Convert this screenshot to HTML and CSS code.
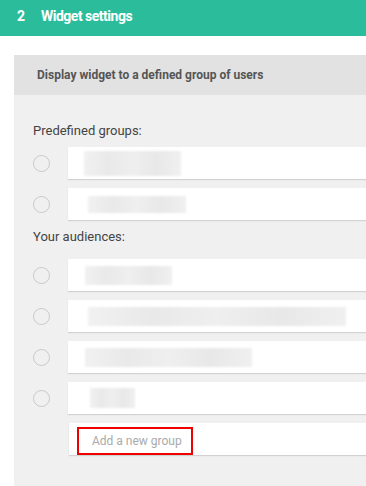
FILE: index.html
```html
<!DOCTYPE html>
<html>
<head>
<meta charset="utf-8">
<link rel="stylesheet" href="styles.css">
</head>
<body>
<header class="topbar">
  <span class="step">2</span>
  <span class="title">Widget settings</span>
</header>
<section class="panel">
  <div class="panel-head">Display widget to a defined group of users</div>
  <div class="panel-body">
    <div class="label label-first">Predefined groups:</div>
    <div class="row"><span class="radio"></span><div class="card"><span class="blur b1"></span></div></div>
    <div class="row"><span class="radio"></span><div class="card"><span class="blur b2"></span></div></div>
    <div class="label label-second">Your audiences:</div>
    <div class="row"><span class="radio"></span><div class="card"><span class="blur b3"></span></div></div>
    <div class="row"><span class="radio"></span><div class="card"><span class="blur b4"></span></div></div>
    <div class="row"><span class="radio"></span><div class="card"><span class="blur b5"></span></div></div>
    <div class="row"><span class="radio"></span><div class="card"><span class="blur b6"></span></div></div>
    <div class="row"><span class="radio-space"></span><div class="card card-add"><span class="add-box">Add a new group</span></div></div>
  </div>
</section>
</body>
</html>
```

FILE: styles.css
```css
html, body {
  margin: 0;
  padding: 0;
  background: #ffffff;
  font-family: Roboto, "Liberation Sans", sans-serif;
  overflow: hidden;
}
.topbar {
  height: 36px;
  background: #2bbd9b;
  color: #ffffff;
  display: flex;
  align-items: center;
  font-weight: 700;
  font-size: 14px;
  letter-spacing: -0.5px;
  padding: 0 0 4px 17px;
  box-sizing: border-box;
}
.step {
  width: 24px;
}
.panel {
  margin: 19px 0 0 14px;
  background: #f0f0f0;
  height: 431px;
}
.panel-head {
  height: 40px;
  background: #e2e2e2;
  color: #555555;
  font-size: 12px;
  font-weight: 700;
  display: flex;
  align-items: center;
  padding-left: 23px;
}
.panel-body {
  padding: 28px 0 0 19px;
}
.label {
  font-size: 13px;
  color: #444444;
  line-height: 16px;
  height: 16px;
}
.label-first {
  margin-bottom: 8px;
}
.label-second {
  margin-top: 0px;
  margin-bottom: 14px;
}
.row {
  display: flex;
  align-items: center;
  margin-bottom: 9px;
}
.radio {
  width: 15px;
  height: 15px;
  border: 1.5px solid #c9c9c9;
  border-radius: 50%;
  margin-right: 18px;
  flex: none;
}
.radio-space {
  width: 36px;
  flex: none;
}
.card {
  flex: 1;
  height: 32px;
  background: #ffffff;
  box-shadow: 0 1px 1px rgba(0,0,0,0.12);
  display: flex;
  align-items: center;
}
.blur {
  display: block;
  height: 19px;
  background: linear-gradient(90deg, #f1f1f1 0%, #e9e9e9 25%, #efefef 50%, #e8e8e8 75%, #f0f0f0 100%);
  filter: blur(1px);
}
.b1 { margin-left: 16px; width: 97px; height: 25px; }
.b2 { margin-left: 20px; width: 98px; height: 17px; }
.b3 { margin-left: 17px; width: 87px; }
.b4 { margin-left: 20px; width: 258px; }
.b5 { margin-left: 17px; width: 167px; }
.b6 { margin-left: 22px; width: 45px; height: 20px; }
.card-add {
  align-items: flex-start;
}
.add-box {
  margin: 4px 0 0 8px;
  width: 116px;
  height: 28px;
  box-sizing: border-box;
  border: 2px solid #ee0000;
  color: #aaaaaa;
  font-size: 12px;
  display: flex;
  align-items: center;
  padding-left: 13px;
}
```
